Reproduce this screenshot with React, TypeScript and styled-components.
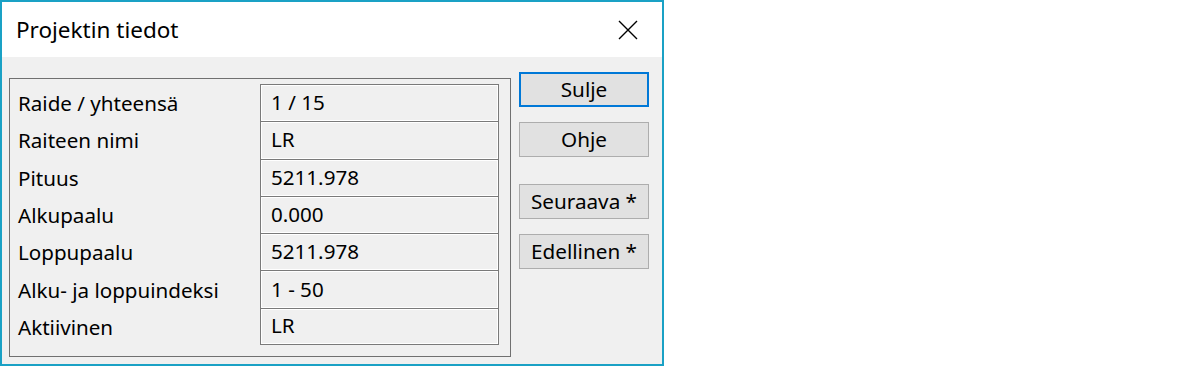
import styled, { createGlobalStyle } from 'styled-components'

const GlobalStyle = createGlobalStyle`
  html, body {
    margin: 0;
    padding: 0;
    background: #ffffff;
  }
  * {
    box-sizing: border-box;
  }
`

const rows = [
  { label: 'Raide / yhteensä', value: '1 / 15' },
  { label: 'Raiteen nimi', value: 'LR' },
  { label: 'Pituus', value: '5211.978' },
  { label: 'Alkupaalu', value: '0.000' },
  { label: 'Loppupaalu', value: '5211.978' },
  { label: 'Alku- ja loppuindeksi', value: '1 - 50' },
  { label: 'Aktiivinen', value: 'LR' },
]

const buttons = [
  { label: 'Sulje', primary: true, gap: 0 },
  { label: 'Ohje', primary: false, gap: 15 },
  { label: 'Seuraava *', primary: false, gap: 27 },
  { label: 'Edellinen *', primary: false, gap: 15 },
]

export default function App() {
  return (
    <>
      <GlobalStyle />
      <Window>
        <TitleBar>
          <Title>Projektin tiedot</Title>
          <CloseButton aria-label="Sulje ikkuna">
            <svg width="20" height="20" viewBox="0 0 20 20">
              <path d="M1 1 L19 19 M19 1 L1 19" stroke="#000" strokeWidth="1.4" fill="none" />
            </svg>
          </CloseButton>
        </TitleBar>
        <Body>
          <GroupBox>
            {rows.map((r, i) => (
              <Row key={r.label}>
                <Label>{r.label}</Label>
                <ValueCell $last={i === rows.length - 1}>{r.value}</ValueCell>
              </Row>
            ))}
          </GroupBox>
          <ButtonColumn>
            {buttons.map((b) => (
              <DialogButton key={b.label} $primary={b.primary} $gap={b.gap}>
                {b.label}
              </DialogButton>
            ))}
          </ButtonColumn>
        </Body>
      </Window>
    </>
  )
}

const Window = styled.div`
  width: 664px;
  height: 366px;
  border: 2px solid #1aa1c5;
  display: flex;
  flex-direction: column;
  font-family: 'Noto Sans', 'Open Sans', sans-serif;
  color: #000;
`

const TitleBar = styled.div`
  height: 55px;
  background: #ffffff;
  display: flex;
  align-items: center;
  justify-content: space-between;
  padding: 0 24px 0 14px;
`

const Title = styled.div`
  font-size: 22.5px;
`

const CloseButton = styled.div`
  display: flex;
  width: 20px;
  height: 20px;
  margin-top: 1px;
`

const Body = styled.div`
  flex: 1;
  background: #f0f0f0;
  display: flex;
  align-items: flex-start;
  padding: 15px 13px 0 7px;
`

const GroupBox = styled.div`
  width: 502px;
  height: 279px;
  margin-top: 6px;
  border: 1px solid #707070;
  padding: 5px 11px 0 8px;
  display: flex;
  flex-direction: column;
`

const Row = styled.div`
  display: grid;
  grid-template-columns: 242px 239px;
  height: 37.3px;
`

const Label = styled.div`
  font-size: 20.6px;
  display: flex;
  align-items: center;
  padding-top: 1px;
  white-space: nowrap;
`

const ValueCell = styled.div<{ $last: boolean }>`
  font-size: 20.6px;
  display: flex;
  align-items: center;
  padding: 0 0 2px 10px;
  border: 1px solid #7a7a7a;
  border-bottom: ${(p) => (p.$last ? '1px solid #7a7a7a' : 'none')};
  box-shadow: inset 1px 1px 0 #ffffff, inset -1px -1px 0 #ffffff;
`

const ButtonColumn = styled.div`
  margin-left: 8px;
  display: flex;
  flex-direction: column;
`

const DialogButton = styled.div<{ $primary: boolean; $gap: number }>`
  width: 130px;
  height: 35px;
  margin-top: ${(p) => p.$gap}px;
  background: #e1e1e1;
  border: ${(p) => (p.$primary ? '2px solid #0078d7' : '1px solid #adadad')};
  display: flex;
  align-items: center;
  justify-content: center;
  font-size: 20.7px;
  padding-bottom: 2px;
  white-space: nowrap;
`
